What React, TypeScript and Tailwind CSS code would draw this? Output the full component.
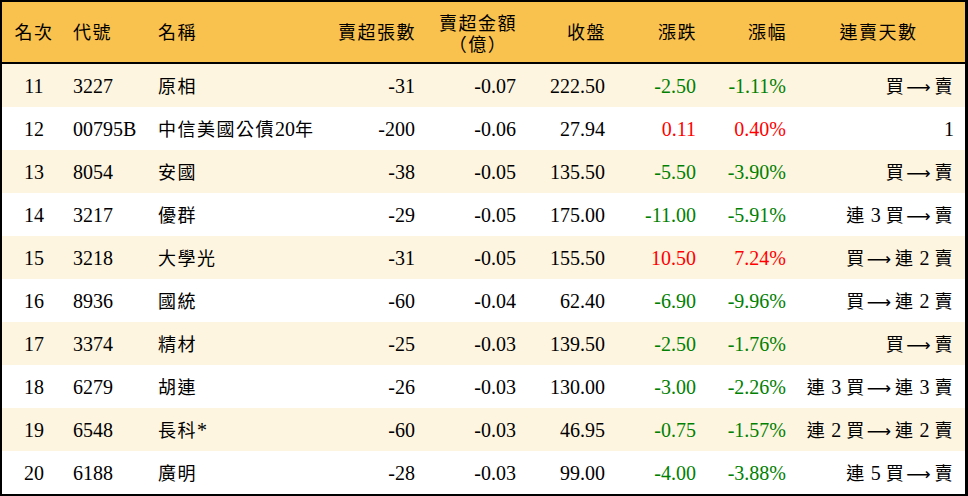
const rows = [
  { rank: 11, code: '3227', name: '原相', lots: '-31', amount: '-0.07', close: '222.50', chg: '-2.50', pct: '-1.11%', streak: '買→賣' },
  { rank: 12, code: '00795B', name: '中信美國公債20年', lots: '-200', amount: '-0.06', close: '27.94', chg: '0.11', pct: '0.40%', streak: '1' },
  { rank: 13, code: '8054', name: '安國', lots: '-38', amount: '-0.05', close: '135.50', chg: '-5.50', pct: '-3.90%', streak: '買→賣' },
  { rank: 14, code: '3217', name: '優群', lots: '-29', amount: '-0.05', close: '175.00', chg: '-11.00', pct: '-5.91%', streak: '連 3 買→賣' },
  { rank: 15, code: '3218', name: '大學光', lots: '-31', amount: '-0.05', close: '155.50', chg: '10.50', pct: '7.24%', streak: '買→連 2 賣' },
  { rank: 16, code: '8936', name: '國統', lots: '-60', amount: '-0.04', close: '62.40', chg: '-6.90', pct: '-9.96%', streak: '買→連 2 賣' },
  { rank: 17, code: '3374', name: '精材', lots: '-25', amount: '-0.03', close: '139.50', chg: '-2.50', pct: '-1.76%', streak: '買→賣' },
  { rank: 18, code: '6279', name: '胡連', lots: '-26', amount: '-0.03', close: '130.00', chg: '-3.00', pct: '-2.26%', streak: '連 3 買→連 3 賣' },
  { rank: 19, code: '6548', name: '長科*', lots: '-60', amount: '-0.03', close: '46.95', chg: '-0.75', pct: '-1.57%', streak: '連 2 買→連 2 賣' },
  { rank: 20, code: '6188', name: '廣明', lots: '-28', amount: '-0.03', close: '99.00', chg: '-4.00', pct: '-3.88%', streak: '連 5 買→賣' },
]

const cols = 'grid grid-cols-[62px_86px_180px_97px_101px_89px_91px_90px_1fr]'

// CJK runs get the CJK font, a bit smaller and spaced like the original; the arrow is drawn long
function Txt({ s, className = '' }: { s: string; className?: string }) {
  const parts = s.split(/([\u3000-\u9fff\uff00-\uffef]+|→)/)
  return (
    <>
      {parts.map((p, i) => {
        if (p === '') return null
        if (p === '→')
          return (
            <span key={i} className="font-[family-name:'DejaVu_Sans',sans-serif] text-[17px] mr-[4px] ml-[1px]">
              ⟶
            </span>
          )
        if (i % 2 === 1)
          return (
            <span
              key={i}
              className={`font-[family-name:'Noto_Sans_CJK_TC',sans-serif] text-[18px] tracking-[1.5px] ${className}`}
            >
              {p}
            </span>
          )
        return <span key={i}>{p}</span>
      })}
    </>
  )
}

export default function App() {
  return (
    <div className="w-[968px] h-[496px] bg-white font-[family-name:'Liberation_Serif','Noto_Sans_CJK_TC',serif] text-[20px] text-black">
      <div className="border-t-2 border-l-2 border-r-[3px] border-b-2 border-black">
        <div className={`${cols} h-[62px] bg-[#f9c14e] border-b-2 border-black items-center`}>
          <div className="text-center pl-[2px]"><Txt s="名次" /></div>
          <div className="pl-[9px]"><Txt s="代號" /></div>
          <div className="pl-[8px]"><Txt s="名稱" /></div>
          <div className="text-right pr-[11px]"><Txt s="賣超張數" /></div>
          <div className="flex justify-end pr-[11px]">
            <div className="flex flex-col items-center gap-[1px]">
              <Txt s="賣超金額" className="inline-block leading-[20px]" />
              <Txt s="（億）" className="inline-block leading-[20px]" />
            </div>
          </div>
          <div className="text-right pr-[11px]"><Txt s="收盤" /></div>
          <div className="text-right pr-[11px]"><Txt s="漲跌" /></div>
          <div className="text-right pr-[11px]"><Txt s="漲幅" /></div>
          <div className="text-center pr-[6px]"><Txt s="連賣天數" /></div>
        </div>

        {rows.map((r, i) => {
          const up = !r.chg.startsWith('-')
          const color = up ? 'text-[#ff0000]' : 'text-[#008000]'
          return (
            <div
              key={r.rank}
              className={`${cols} h-[43px] items-center ${i % 2 === 0 ? 'bg-[#fef5e0]' : 'bg-white'}`}
            >
              <div className="text-center pl-[2px]">{r.rank}</div>
              <div className="pl-[9px]">{r.code}</div>
              <div className="pl-[8px] whitespace-nowrap"><Txt s={r.name} /></div>
              <div className="text-right pr-[12px]">{r.lots}</div>
              <div className="text-right pr-[12px]">{r.amount}</div>
              <div className="text-right pr-[12px]">{r.close}</div>
              <div className={`text-right pr-[12px] ${color}`}>{r.chg}</div>
              <div className={`text-right pr-[12px] ${color}`}>{r.pct}</div>
              <div className="text-right pr-[11px] whitespace-nowrap"><Txt s={r.streak} /></div>
            </div>
          )
        })}
      </div>
    </div>
  )
}
